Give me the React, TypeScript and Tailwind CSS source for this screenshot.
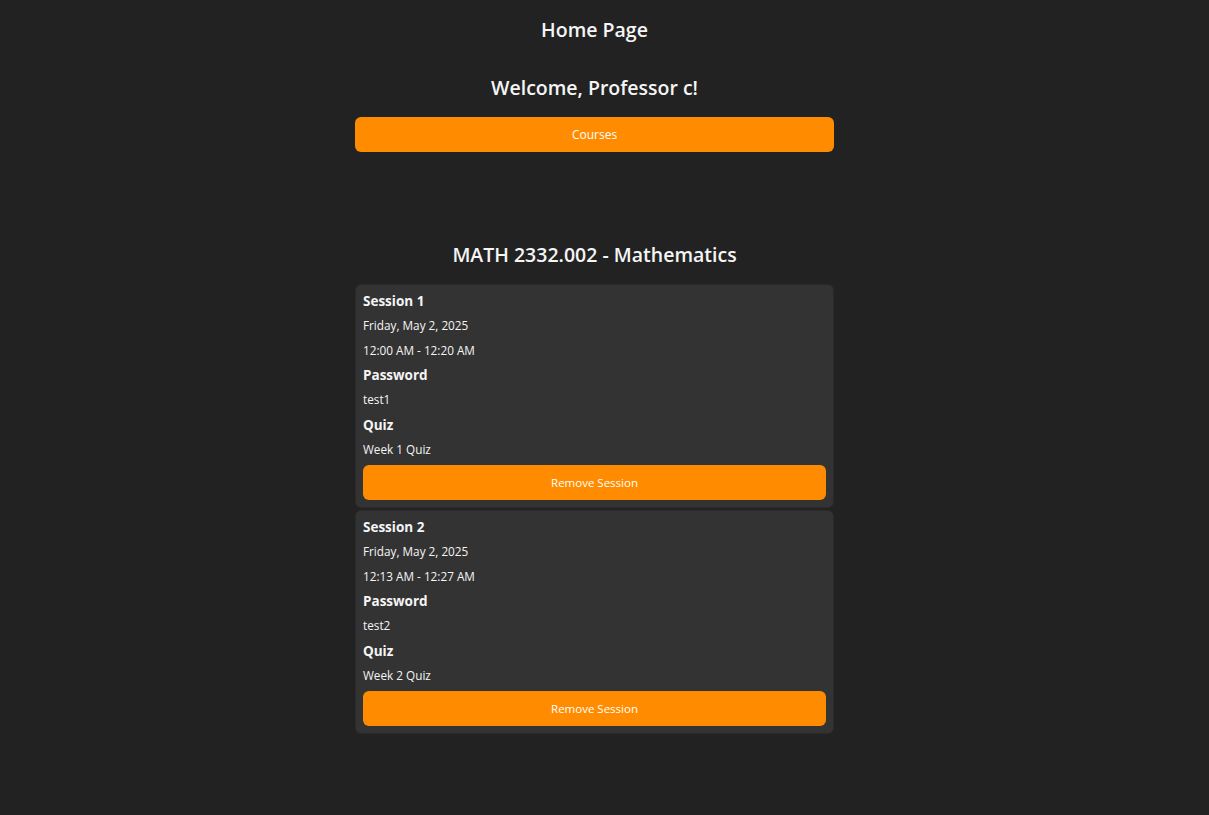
import React from "react";

const sessions = [
  { name: "Session 1", date: "Friday, May 2, 2025", time: "12:00 AM - 12:20 AM", password: "test1", quiz: "Week 1 Quiz" },
  { name: "Session 2", date: "Friday, May 2, 2025", time: "12:13 AM - 12:27 AM", password: "test2", quiz: "Week 2 Quiz" },
];

export default function App() {
  return (
    <div
      className="min-h-[815px] w-full bg-[#222222] pr-[20px] text-[#f5f5f5]"
      style={{ fontFamily: '"Open Sans", "Noto Sans", sans-serif' }}
    >
      <div className="mx-auto flex w-[479px] flex-col items-stretch">
        <h1 className="mt-[16px] h-[28px] text-center text-[19.5px] font-semibold leading-[28px]">Home Page</h1>
        <h2 className="mt-[30px] h-[28px] text-center text-[19.5px] font-semibold leading-[28px]">Welcome, Professor c!</h2>
        <button className="mt-[15px] h-[35px] w-full rounded-[6px] bg-[#ff8c00] text-[12px] text-white">Courses</button>
        <h2 className="mt-[89px] h-[28px] text-center text-[19.5px] font-semibold leading-[28px]">MATH 2332.002 - Mathematics</h2>
        <div className="mt-[15px] flex flex-col gap-[2px]">
          {sessions.map((s) => (
            <div key={s.name} className="flex flex-col gap-[7px] rounded-[6px] border border-[#2a2a2a] bg-[#333333] px-[7px] pb-[7px] pt-[7px]">
              <div className="text-[13.5px] font-bold leading-[18px]">{s.name}</div>
              <div className="text-[11.75px] leading-[17.5px]">{s.date}</div>
              <div className="text-[11.75px] leading-[17.5px]">{s.time}</div>
              <div className="text-[13.5px] font-bold leading-[18px]">Password</div>
              <div className="text-[11.75px] leading-[17.5px]">{s.password}</div>
              <div className="text-[13.5px] font-bold leading-[18px]">Quiz</div>
              <div className="text-[11.75px] leading-[17.5px]">{s.quiz}</div>
              <button className="h-[35px] w-full rounded-[6px] bg-[#ff8c00] text-[11.5px] text-white">Remove Session</button>
            </div>
          ))}
        </div>
      </div>
    </div>
  );
}
